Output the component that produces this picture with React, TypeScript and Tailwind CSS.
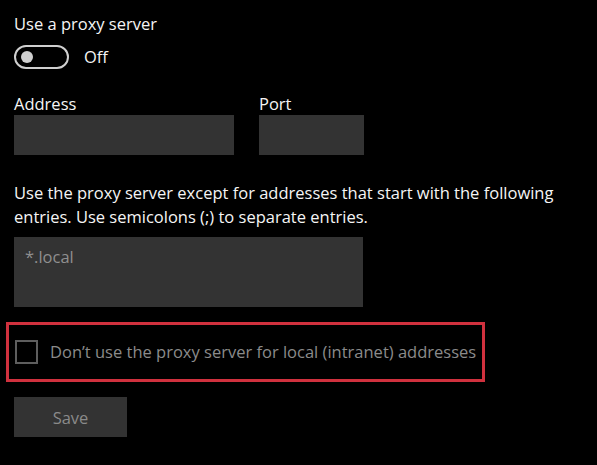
import React from "react";

export default function App() {
  return (
    <div className="w-[597px] h-[465px] bg-black text-[#f5f5f5] overflow-hidden font-['Open_Sans',sans-serif] text-[16.5px]">
      <div className="pl-[14px] pt-[12px] flex flex-col items-start">
        <p className="leading-[24px]">Use a proxy server</p>

        <div className="mt-[9px] flex items-center h-[24px]">
          <div className="w-[55px] h-[24px] rounded-full border-2 border-[#cfcfcf] flex items-center pl-[5px]">
            <div className="w-[12px] h-[12px] rounded-full bg-[#cfcfcf]" />
          </div>
          <span className="ml-[15px] leading-[24px]">Off</span>
        </div>

        <div className="mt-[23px] flex gap-[25px]">
          <div className="flex flex-col">
            <span className="leading-[23px]">Address</span>
            <div className="w-[220px] h-[40px] bg-[#333333]" />
          </div>
          <div className="flex flex-col">
            <span className="leading-[23px]">Port</span>
            <div className="w-[105px] h-[40px] bg-[#333333]" />
          </div>
        </div>

        <p className="mt-[26px] leading-[24px] w-[560px]">
          Use the proxy server except for addresses that start with the following entries. Use semicolons (;) to separate entries.
        </p>

        <div className="mt-[8px] w-[349px] h-[70px] bg-[#333333] pl-[11px] pt-[8px]">
          <span className="leading-[24px] text-[#8f8f8f]">*.local</span>
        </div>

        <div className="mt-[15px] -ml-[8px] w-[479px] h-[60px] border-[3px] border-[#d0313e] flex items-center pl-[6px]">
          <div className="w-[23px] h-[24px] border-2 border-[#5e5e5e]" />
          <span className="ml-[12px] leading-[24px] text-[#8b8b8b] whitespace-nowrap">
            Don’t use the proxy server for local (intranet) addresses
          </span>
        </div>

        <div className="mt-[15px] w-[113px] h-[40px] bg-[#333333] flex justify-center pt-[9px]">
          <span className="leading-[24px] text-[#8a8a8a]">Save</span>
        </div>
      </div>
    </div>
  );
}
